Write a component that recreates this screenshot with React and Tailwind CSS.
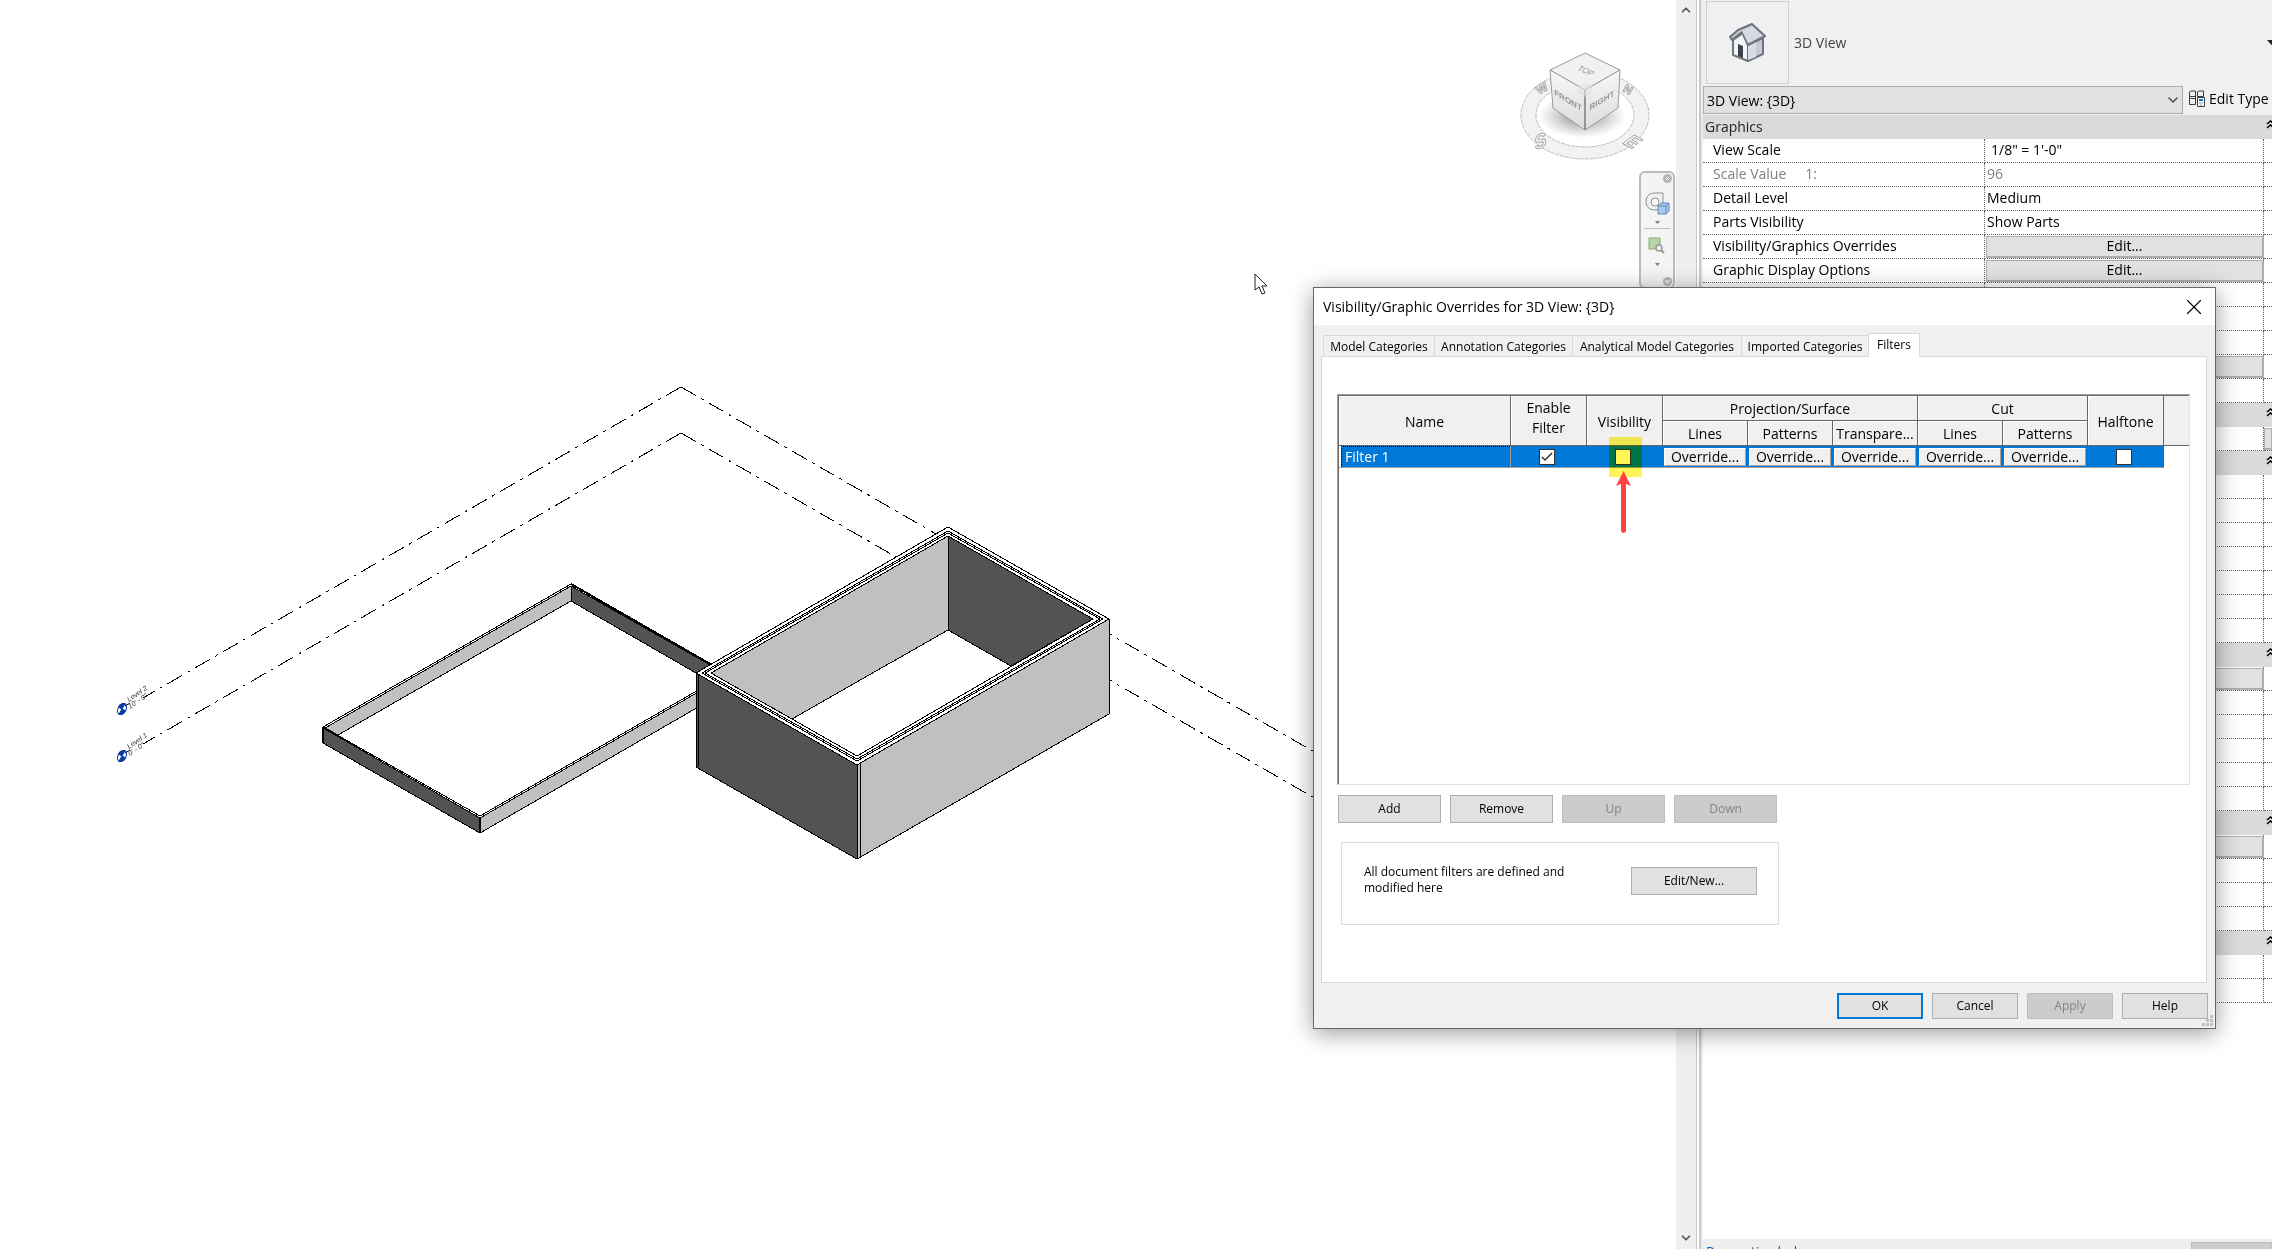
import { useState } from "react";
import { ChevronDown, ChevronUp, X } from "lucide-react";

const TABS = [
  { name: "Model Categories", width: "w-[111px]" },
  { name: "Annotation Categories", width: "w-[138px]" },
  { name: "Analytical Model Categories", width: "w-[169px]" },
  { name: "Imported Categories", width: "w-[127px]" },
  { name: "Filters", width: "w-[52px]" },
];

const EMPTY = {};
const EDIT = { edit: true };

const SECTIONS = [
  {
    title: "Graphics",
    rows: [
      { label: "View Scale", value: "1/8\" = 1'-0\"", indent: true },
      { label: "Scale Value", suffix: "1:", value: "96", muted: true },
      { label: "Detail Level", value: "Medium" },
      { label: "Parts Visibility", value: "Show Parts" },
      { label: "Visibility/Graphics Overrides", edit: true },
      { label: "Graphic Display Options", edit: true },
      EMPTY, EMPTY, EMPTY, EDIT, EMPTY,
    ],
  },
  { rows: [{ corner: true }] },
  { rows: [EMPTY, EMPTY, EMPTY, EMPTY, EMPTY, EMPTY, EMPTY] },
  { rows: [EDIT, EMPTY, EMPTY, EMPTY, EMPTY, EMPTY] },
  { rows: [EDIT, EMPTY, EMPTY, EMPTY] },
  { rows: [EMPTY, EMPTY] },
];

const DASH = "17 6 3 6";

function LevelHead({ x, y, name, elevation }) {
  return (
    <g>
      <g transform={`translate(${x} ${y}) rotate(30)`}>
        <ellipse rx="4" ry="6" fill="#fff" stroke="#0a3ba8" strokeWidth="1" />
        <path d="M0 0V-6A4 6 0 0 0 -4 0ZM0 0V6A4 6 0 0 0 4 0Z" fill="#0a3ba8" stroke="#0a3ba8" />
      </g>
      <path d={`M${x + 3} ${y - 3}l5 -3`} stroke="#111" />
      <g fill="#333" fontSize="7" fontStyle="italic">
        <text transform={`translate(${x + 7} ${y - 7}) rotate(-34)`}>{name}</text>
        <text transform={`translate(${x + 8} ${y}) rotate(-34)`}>{elevation}</text>
      </g>
    </g>
  );
}

function Model() {
  return (
    <svg className="block shrink-0 font-['Liberation_Sans',sans-serif]" width="1676" height="1249" viewBox="0 0 1676 1249" fill="none">
      {/* Level lines */}
      <g stroke="#000" strokeDasharray={DASH} shapeRendering="crispEdges">
        <path d="M681 387L143 698" />
        <path d="M681 387L1330 761" />
        <path d="M681 433L143 744" />
        <path d="M681 433L1330 807" />
      </g>
      <LevelHead x={122} y={709} name="Level 2" elevation={"10' - 0\""} />
      <LevelHead x={122} y={756} name="Level 1" elevation={"0' - 0\""} />

      {/* Shallow tray */}
      <g stroke="#000" strokeLinejoin="round" shapeRendering="crispEdges">
        <path d="M571 585L323 727V743L480 833L720 695V671Z" fill="#fff" stroke="none" />
        <path d="M571 586L325 728L338 735L571 601Z" fill="#c0c0c0" />
        <path d="M571 586V601L696 673L712 666Z" fill="#535353" />
        <path d="M323 728L480 818V833L323 743Z" fill="#535353" />
        <path d="M480 818L700 691V706L480 833Z" fill="#c0c0c0" />
        <path d="M571 584L323 727L480 816L700 689" />
        <path d="M571 584L712 665M323 727V743M480 817V833" strokeWidth="2" />
      </g>

      {/* Deep box */}
      <g stroke="#000" strokeLinejoin="round" shapeRendering="crispEdges">
        <path d="M948 527L1109 619V714L857 859L696 767V673Z" fill="#fff" />
        <path d="M948 536L711 673L792 719L948 630Z" fill="#c0c0c0" />
        <path d="M948 536L1093 619L1011 666L948 630Z" fill="#535353" />
        <path d="M696 673L857 765V859L696 767Z" fill="#535353" />
        <path d="M857 765L1109 619V714L857 859Z" fill="#c0c0c0" />
        <path d="M948 527L1109 619L857 765L696 673Z" />
        <path d="M948 531L1103 619L857 761L702 673Z" />
        <path d="M948 533L1100 619L857 759L705 673Z" />
        <path d="M948 536L1093 619L857 756L711 673Z" />
        <path d="M860 764V857M698 674V767" />
      </g>

      {/* View cube */}
      <defs>
        <radialGradient id="cubeShadow">
          <stop offset="0.3" stopColor="#777" stopOpacity="0.6" />
          <stop offset="1" stopColor="#999" stopOpacity="0" />
        </radialGradient>
        <linearGradient id="cubeFace" x1="0" y1="0" x2="0" y2="1">
          <stop offset="0" stopColor="#f7f7f7" />
          <stop offset="1" stopColor="#dcdcdc" />
        </linearGradient>
      </defs>
      <path
        fillRule="evenodd"
        d="M1521 115a64 44 0 1 0 128 0a64 44 0 1 0 -128 0ZM1536 115a49 32 0 1 0 98 0a49 32 0 1 0 -98 0Z"
        fill="#f2f2f2"
        stroke="#bdbdbd"
        strokeDasharray="4 1"
      />
      <g fill="#f4f4f4" stroke="#9a9a9a" strokeWidth="0.8" fontWeight="700" fontSize="19" textAnchor="middle">
        <text transform="translate(1541 148) rotate(-24) skewX(-20)">S</text>
        <text transform="translate(1627 146) rotate(28) skewX(-25)">E</text>
        <text transform="translate(1544 92) rotate(-30)" fontSize="12">W</text>
        <text transform="translate(1626 93) rotate(30)" fontSize="12">N</text>
      </g>
      <ellipse cx="1582" cy="116" rx="44" ry="22" fill="url(#cubeShadow)" />
      <g stroke="#9b9b9b" strokeLinejoin="round">
        <path d="M1585 53L1620 70L1585 90L1550 70Z" fill="#f1f1f1" />
        <path d="M1550 70L1585 90V130L1553 108Z" fill="url(#cubeFace)" />
        <path d="M1620 70L1585 90V130L1618 108Z" fill="url(#cubeFace)" />
        <path d="M1585 90V130" stroke="#777" />
      </g>
      <path d="M1578 86L1585 82L1592 86V93L1585 97L1578 93Z" fill="#dfe3ea" opacity="0.6" />
      <g fill="#93959a" fontWeight="700" fontSize="8" textAnchor="middle">
        <text transform="translate(1568 103) skewY(31)">FRONT</text>
        <text transform="translate(1602 103) skewY(-31)">RIGHT</text>
        <text transform="translate(1584 73) rotate(24) skewX(-20)" fontWeight="400">TOP</text>
      </g>

      {/* Pointer */}
      <path d="M1255 274V290L1259 287L1262 294L1265 293L1262 286H1267Z" fill="#fff" stroke="#222" strokeLinejoin="round" />
    </svg>
  );
}

function NavigationBar() {
  return (
    <div className="absolute right-px top-[171px] flex h-[118px] w-9 flex-col items-center rounded-md border-2 border-[#bcbcbc] bg-[#f4f4f4]">
      <button aria-label="Close navigation bar" className="mr-px mt-px self-end">
        <svg width="9" height="9" viewBox="0 0 9 9"><circle cx="4.5" cy="4.5" r="4.5" fill="#b5b5b5" /><path d="M3 3l3 3M6 3l-3 3" stroke="#fff" /></svg>
      </button>
      <button aria-label="Steering wheel" className="mt-2">
        <svg width="26" height="24" viewBox="0 0 26 24" fill="none">
          <path d="M2 10a8 8 0 0 1 8-8h9v9a8 8 0 0 1-8 8h-1a8 8 0 0 1-8-8Z" fill="#eef0f2" stroke="#8e9093" />
          <circle cx="11" cy="11" r="4" fill="#fafafa" stroke="#8e9093" />
          <path d="M14 15l3-3h8v8l-3 3h-8Z" fill="#a9c8ea" stroke="#5f8fc0" />
          <path d="M14 15h8v8M22 15l3-3" stroke="#5f8fc0" />
        </svg>
      </button>
      <svg className="mt-1.5" width="5" height="3" viewBox="0 0 5 3"><path d="M0 0h5L2.500 3Z" fill="#7f7f7f" /></svg>
      <div className="mt-1 h-px w-[26px] bg-[#bcbcbc]" />
      <button aria-label="Zoom in region" className="mt-2">
        <svg width="18" height="17" viewBox="0 0 18 17" fill="none">
          <path d="M1 1h11v11H1Z" fill="#b9d3a9" stroke="#84ab72" />
          <circle cx="11" cy="11" r="3" fill="#f4f4f4" stroke="#999" strokeWidth="1.500" />
          <path d="M13 13l3 3" stroke="#999" strokeWidth="2" />
        </svg>
      </button>
      <svg className="mt-[9px]" width="5" height="3" viewBox="0 0 5 3"><path d="M0 0h5L2.500 3Z" fill="#7f7f7f" /></svg>
      <button aria-label="Navigation bar options" className="mb-px mr-px mt-auto self-end">
        <svg width="9" height="9" viewBox="0 0 9 9"><circle cx="4.5" cy="4.5" r="4.5" fill="#b5b5b5" /><path d="M2 4h5M3 6h3" stroke="#fff" /></svg>
      </button>
    </div>
  );
}

function CollapseIcon() {
  return (
    <svg className="mt-[5px] shrink-0" width="9" height="9" viewBox="0 0 9 9" fill="none" stroke="#000" strokeWidth="1.500">
      <path d="M1 4l3.500-3L8 4M1 8l3.500-3L8 8" />
    </svg>
  );
}

function PropertyRow({ row }) {
  return (
    <tr className="h-6">
      <td className={`border-b border-r border-dotted border-[#666] pb-0.5 pl-2.5 ${row.muted ? "text-[#808080]" : ""}`}>
        {row.label}
        {row.suffix && <span className="ml-[19px]">{row.suffix}</span>}
      </td>
      <td className={`border-b border-r border-dotted border-[#666] ${row.edit ? "" : "pb-0.5"} ${row.indent ? "pl-1.5" : "pl-0.5"} ${row.muted ? "text-[#808080]" : ""}`}>
        {row.edit ? (
          <button className="-ml-px block h-[22px] w-[278px] border border-b-2 border-r-2 border-[#adadad] bg-[#e1e1e1] leading-[18px]">Edit...</button>
        ) : (
          row.value
        )}
      </td>
      <td className="border-b border-dotted border-[#666]">
        {row.corner && <button aria-label="Browse" className="block h-[22px] w-full border border-b-2 border-[#adadad] bg-[#e1e1e1]" />}
      </td>
    </tr>
  );
}

function PropertiesPanel() {
  return (
    <aside className="flex w-[571px] shrink-0 flex-col overflow-hidden border-l-2 border-[#ececec] bg-white text-[14px]">
      <div className="flex h-[86px] items-center bg-[#f0f0f0] pb-0.5 pl-[3px]">
        <div className="flex h-[83px] w-[83px] items-center justify-center border border-[#cfcfcf]">
          <svg width="40" height="42" viewBox="0 0 40 42" strokeLinejoin="round">
            <path d="M5 19L15 12L20 24L20 40L5 34Z" fill="#f4f5f8" stroke="#6d747d" strokeWidth="2" />
            <path d="M20 24L35 17V33L20 40Z" fill="#c5cbd4" stroke="#6d747d" strokeWidth="2" />
            <path d="M20 25L28 21V36L20 39Z" fill="#d9dde3" />
            <path d="M10 23l5 2v12l-5-2Z" fill="#3d434c" />
            <path d="M10 9L24 3L37 15L20 24L14 11L4 19L2 16Z" fill="#c5ccd6" stroke="#6d747d" strokeWidth="2" />
            <path d="M14 10L24 5L34 15L20 22Z" fill="#d5dae2" />
          </svg>
        </div>
        <span className="ml-[5px] text-[#444]">3D View</span>
        <svg className="-mr-1 ml-auto" width="9" height="5" viewBox="0 0 9 5"><path d="M0 0h9L4.500 5Z" fill="#222" /></svg>
      </div>
      <div className="flex h-[29px] items-start bg-[#f0f0f0]">
        <div className="relative min-w-0 flex-1">
          <select aria-label="View instance" className="block h-7 w-full appearance-none border border-[#adadad] bg-[#e1e1e1] pl-[3px]">
            <option>3D View: {"{3D}"}</option>
          </select>
          <ChevronDown className="pointer-events-none absolute right-0.5 top-1.5 text-[#444]" size={16} strokeWidth={2} />
        </div>
        <button className="ml-[5px] flex h-6 w-[84px] items-center gap-1 whitespace-nowrap">
          <svg className="shrink-0" width="17" height="17" viewBox="0 0 17 17" fill="none" stroke="#333d4a">
            <path d="M1.500 2l1-1h5v5.500h-6ZM9.500 2l1-1h5v5.500h-6ZM1.500 9.500l1-1h5v6h-6ZM1.500 6.500v4M7.500 6v3" />
            <path d="M9.500 7.500h7v9h-7Z" fill="#fff" />
            <path d="M11 10h4" stroke="#1b6fc4" strokeWidth="2" />
            <path d="M11.500 13h1M13.500 13h1M12.500 15h1" />
          </svg>
          Edit Type
        </button>
      </div>
      <table className="w-full table-fixed border-separate border-spacing-0">
        <colgroup>
          <col className="w-[282px]" />
          <col className="w-[279px]" />
          <col />
        </colgroup>
        {SECTIONS.map((section, i) => (
          <tbody key={i}>
            <tr className="h-6 bg-[#dadada]">
              <th colSpan={2} className="pb-0.5 pl-0.5 text-left font-normal text-[#222]">{section.title}</th>
              <td className="pl-0.5 align-top"><CollapseIcon /></td>
            </tr>
            {section.rows.map((row, n) => <PropertyRow key={n} row={row} />)}
          </tbody>
        ))}
      </table>
      <div className="mt-auto flex h-[10px] items-start justify-between overflow-hidden bg-[#eee]">
        <a href="#help" className="ml-[3px] mt-0.5 text-[#0a5fc0]">Properties help</a>
        <button disabled aria-label="Apply properties" className="mt-[3px] h-7 w-[81px] border border-[#bfbfbf] bg-[#ccc]" />
      </div>
    </aside>
  );
}

function DialogButton({ children, className, primary, disabled }) {
  const tone = disabled
    ? "border border-[#bfbfbf] bg-[#ccc] text-[#838383]"
    : primary
      ? "border-2 border-[#0078d7] bg-[#e1e1e1]"
      : "border border-[#adadad] bg-[#e1e1e1]";
  return <button disabled={disabled} className={`${tone} ${className}`}>{children}</button>;
}

function CheckBox({ label, checked, onChange }) {
  return (
    <span className="relative mr-1 block size-4">
      <input
        type="checkbox"
        aria-label={label}
        checked={checked}
        onChange={onChange}
        className="block size-4 appearance-none border border-[#333] bg-white"
      />
      {checked && (
        <svg className="pointer-events-none absolute inset-0" width="16" height="16" viewBox="0 0 16 16" fill="none">
          <path d="M3 8l3 3 7-7" stroke="#333" strokeWidth="1.500" />
        </svg>
      )}
    </span>
  );
}

const HEAD = "border-b border-r border-[#666] bg-[#f0f0f0] p-0 pt-0.5 font-normal shadow-[inset_1px_1px_0_#fff]";

function FilterTable() {
  const [flags, setFlags] = useState({ enable: true, visible: false, halftone: false });
  const toggle = (key) => setFlags((f) => ({ ...f, [key]: !f[key] }));

  return (
    <div className="h-[391px] border border-b-[#e3e3e3] border-l-[#a0a0a0] border-r-[#e3e3e3] border-t-[#a0a0a0]">
      <div className="h-full border-l border-t border-[#696969]">
        <table className="w-full table-fixed border-separate border-spacing-0 text-[14px] leading-5">
          <colgroup>
            <col className="w-[172px]" />
            <col className="w-[76px]" />
            <col className="w-[76px]" />
            <col className="w-[85px]" />
            <col className="w-[85px]" />
            <col className="w-[85px]" />
            <col className="w-[85px]" />
            <col className="w-[85px]" />
            <col className="w-[76px]" />
            <col />
          </colgroup>
          <thead>
            <tr className="h-[25px]">
              <th rowSpan={2} className={HEAD}>Name</th>
              <th rowSpan={2} className={`${HEAD} align-top`}>Enable<br />Filter</th>
              <th rowSpan={2} className={HEAD}>Visibility</th>
              <th colSpan={3} className={HEAD}>Projection/Surface</th>
              <th colSpan={2} className={HEAD}>Cut</th>
              <th rowSpan={2} className={HEAD}>Halftone</th>
              <th rowSpan={2} className="border-b border-[#666] bg-[#f0f0f0]" />
            </tr>
            <tr className="h-[25px]">
              <th className={HEAD}>Lines</th>
              <th className={HEAD}>Patterns</th>
              <th className={HEAD}>Transpare...</th>
              <th className={HEAD}>Lines</th>
              <th className={HEAD}>Patterns</th>
            </tr>
          </thead>
          <tbody>
            <tr className="h-[22px]">
              <td className="border-b border-r border-[#a0a0a0] p-0 pl-0.5">
                <div className="h-[21px] border-l border-t border-dotted border-black bg-[#0078d7] pl-[3px] text-white">Filter 1</div>
              </td>
              <td className="border-b border-[#a0a0a0] bg-[#0078d7] p-0">
                <div className="flex justify-center"><CheckBox label="Enable filter" checked={flags.enable} onChange={() => toggle("enable")} /></div>
              </td>
              <td className="relative border-b border-[#a0a0a0] bg-[#0078d7] p-0">
                <div className="flex justify-center"><CheckBox label="Visibility" checked={flags.visible} onChange={() => toggle("visible")} /></div>
                <div className="pointer-events-none absolute -top-[9px] left-[22px] h-10 w-[33px] bg-[#fff557] mix-blend-multiply" />
                <svg className="pointer-events-none absolute left-[29px] top-[25px]" width="15" height="62" viewBox="0 0 15 62">
                  <path d="M7.500 0L15 15L10 13V59.500a2.500 2.500 0 0 1-5 0V13L0 15Z" fill="#ff4343" />
                </svg>
              </td>
              {["lines", "patterns", "transparency", "cut lines", "cut patterns"].map((name) => (
                <td key={name} className="border-b border-[#a0a0a0] bg-[#0078d7] py-0 pl-px pr-0.5">
                  <button aria-label={`Override ${name}`} className="block h-[18px] w-full border border-b-[#a0a0a0] border-l-white border-r-[#a0a0a0] border-t-white bg-[#f0f0f0] leading-4">Override...</button>
                </td>
              ))}
              <td className="border-b border-[#a0a0a0] bg-[#0078d7] p-0">
                <div className="flex justify-center"><CheckBox label="Halftone" checked={flags.halftone} onChange={() => toggle("halftone")} /></div>
              </td>
              <td />
            </tr>
          </tbody>
        </table>
      </div>
    </div>
  );
}

function OverridesDialog() {
  const [tab, setTab] = useState("Filters");

  return (
    <div role="dialog" aria-labelledby="dialog-title" className="absolute right-14 top-[287px] w-[903px] border border-[#666] bg-[#f0f0f0] text-[12px] shadow-[0_4px_22px_rgba(0,0,0,0.4)]">
      <div className="flex h-[37px] items-center justify-between bg-white pl-[9px] pr-2">
        <h1 id="dialog-title" className="text-[14px]">Visibility/Graphic Overrides for 3D View: {"{3D}"}</h1>
        <button aria-label="Close"><X size={26} strokeWidth={1} /></button>
      </div>

      <div role="tablist" className="relative z-10 -mb-px ml-[9px] flex h-8 items-end">
        {TABS.map(({ name, width }) => (
          <button
            key={name}
            role="tab"
            aria-selected={tab === name}
            onClick={() => setTab(name)}
            className={`whitespace-nowrap border-[#d9d9d9] ${width} ${
              tab === name ? "h-6 border-x border-t bg-white pb-0.5" : "h-[22px] border-y border-l pt-px"
            }`}
          >
            {name}
          </button>
        ))}
      </div>

      <div className="ml-[7px] mr-2 border border-[#d9d9d9] bg-white pb-[57px] pl-[15px] pr-4 pt-[37px]">
        <FilterTable />
        <div className="mt-2.5 flex gap-[9px] pl-px">
          <DialogButton className="h-7 w-[103px]">Add</DialogButton>
          <DialogButton className="h-7 w-[103px]">Remove</DialogButton>
          <DialogButton className="h-7 w-[103px]" disabled>Up</DialogButton>
          <DialogButton className="h-7 w-[103px]" disabled>Down</DialogButton>
        </div>
        <div className="ml-1 mt-[19px] flex h-[83px] w-[438px] items-start justify-between border border-[#dcdcdc] pl-[22px] pr-[21px] pt-[21px]">
          <p className="w-[220px] leading-4">All document filters are defined and modified here</p>
          <DialogButton className="mt-[3px] h-7 w-[126px]">Edit/New...</DialogButton>
        </div>
      </div>

      <div className="flex h-[45px] items-start justify-end gap-[9px] pr-[7px] pt-2.5">
        <DialogButton className="h-[26px] w-[86px]" primary>OK</DialogButton>
        <DialogButton className="h-[26px] w-[86px]">Cancel</DialogButton>
        <DialogButton className="h-[26px] w-[86px]" disabled>Apply</DialogButton>
        <DialogButton className="h-[26px] w-[86px]">Help</DialogButton>
      </div>
      <svg className="absolute bottom-0.5 right-0.5" width="11" height="11" viewBox="0 0 11 11" fill="#bfbfbf">
        <path d="M8 0h3v3H8ZM4 4h3v3H4ZM8 4h3v3H8ZM0 8h3v3H0ZM4 8h3v3H4ZM8 8h3v3H8Z" />
      </svg>
    </div>
  );
}

export default function App() {
  return (
    <div className="relative flex h-screen overflow-hidden bg-white font-['Open_Sans','Noto_Sans',sans-serif] text-black">
      <main className="relative min-w-0 flex-1 overflow-hidden">
        <Model />
        <NavigationBar />
      </main>
      <div className="flex w-[21px] shrink-0 flex-col items-center justify-between border-r border-[#c8c8c8] bg-[#efefef] pb-1 pt-[3px] text-[#555]">
        <button aria-label="Scroll up"><ChevronUp size={14} strokeWidth={3} /></button>
        <button aria-label="Scroll down"><ChevronDown size={14} strokeWidth={3} /></button>
      </div>
      <div className="ml-0.5 w-0.5 shrink-0 bg-[#c8c8c8]" />
      <PropertiesPanel />
      <OverridesDialog />
    </div>
  );
}
